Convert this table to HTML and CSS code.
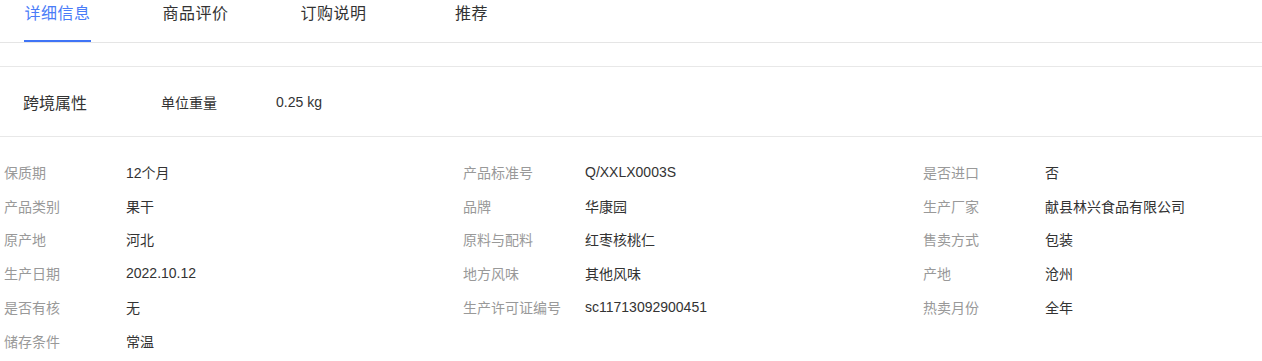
FILE: index.html
```html
<!DOCTYPE html>
<html lang="zh-CN">
  <head>
    <meta charset="UTF-8" />
    <meta name="viewport" content="width=device-width, initial-scale=1.0" />
    <title>商品详情</title>
    <link rel="stylesheet" href="styles.css">
  </head>
  <body>
    <div class="tabs">
      <div class="tab active"><span>详细信息</span></div>
      <div class="tab"><span>商品评价</span></div>
      <div class="tab"><span>订购说明</span></div>
      <div class="tab"><span>推荐</span></div>
    </div>

    <div class="cross-border">
      <div class="cb-title">跨境属性</div>
      <div class="cb-name">单位重量</div>
      <div class="cb-value">0.25 kg</div>
    </div>

    <div class="params">
      <div class="param"><span class="label">保质期</span><span class="value">12个月</span></div>
      <div class="param"><span class="label">产品标准号</span><span class="value">Q/XXLX0003S</span></div>
      <div class="param"><span class="label">是否进口</span><span class="value">否</span></div>
      <div class="param"><span class="label">产品类别</span><span class="value">果干</span></div>
      <div class="param"><span class="label">品牌</span><span class="value">华康园</span></div>
      <div class="param"><span class="label">生产厂家</span><span class="value">献县林兴食品有限公司</span></div>
      <div class="param"><span class="label">原产地</span><span class="value">河北</span></div>
      <div class="param"><span class="label">原料与配料</span><span class="value">红枣核桃仁</span></div>
      <div class="param"><span class="label">售卖方式</span><span class="value">包装</span></div>
      <div class="param"><span class="label">生产日期</span><span class="value">2022.10.12</span></div>
      <div class="param"><span class="label">地方风味</span><span class="value">其他风味</span></div>
      <div class="param"><span class="label">产地</span><span class="value">沧州</span></div>
      <div class="param"><span class="label">是否有核</span><span class="value">无</span></div>
      <div class="param"><span class="label">生产许可证编号</span><span class="value">sc11713092900451</span></div>
      <div class="param"><span class="label">热卖月份</span><span class="value">全年</span></div>
      <div class="param"><span class="label">储存条件</span><span class="value">常温</span></div>
    </div>
  </body>
</html>
```

FILE: styles.css
```css
* {
  margin: 0;
  padding: 0;
  box-sizing: border-box;
}
html,
body {
  width: 100%;
  height: 100%;
  overflow: hidden;
  background: #fff;
  color: #333;
  font-family: "Liberation Sans", "Noto Sans CJK SC", sans-serif;
}

/* 顶部选项卡 */
.tabs {
  display: flex;
  gap: 23px;
  height: 43px;
  border-bottom: 1px solid #e5e5e5;
}
.tab {
  width: 115px;
  display: flex;
  justify-content: center;
  font-size: 16px;
  line-height: 28px;
  color: #333;
  cursor: pointer;
}
.tab span {
  display: block;
  height: 42px;
  letter-spacing: 0.5px;
}
.tab.active {
  color: #4a7cf8;
}
.tab.active span {
  border-bottom: 2px solid #3f74f6;
}

/* 跨境属性 */
.cross-border {
  display: flex;
  align-items: center;
  margin-top: 23px;
  height: 71px;
  padding-left: 23px;
  border-top: 1px solid #e8e8e8;
  border-bottom: 1px solid #e8e8e8;
}
.cb-title {
  width: 138px;
  font-size: 16px;
}
.cb-name {
  width: 115px;
  font-size: 14px;
}
.cb-value {
  font-size: 14px;
}

/* 商品参数 */
.params {
  display: grid;
  grid-template-columns: 459px 460px 1fr;
  grid-auto-rows: 33.8px;
  padding: 18px 0 0 4px;
  font-size: 14px;
}
.param {
  display: flex;
  align-items: center;
}
.label {
  width: 122px;
  color: #999;
}
.value {
  color: #333;
}
```
